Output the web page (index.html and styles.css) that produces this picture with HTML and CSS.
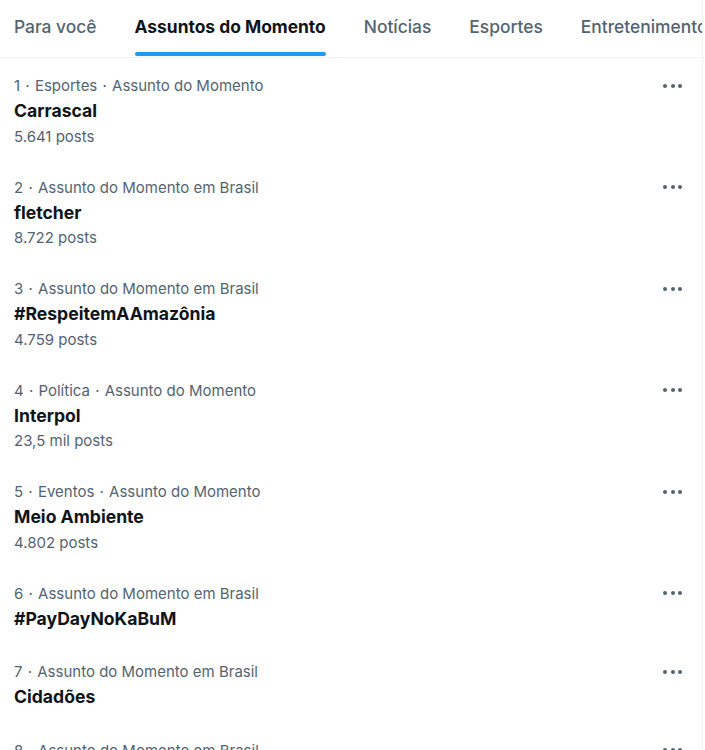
FILE: index.html
```html
<!DOCTYPE html>
<html>

<head>
    <meta charset="utf-8">
    <title>Assuntos do Momento</title>
    <link rel="stylesheet" href="styles.css">
</head>

<body>
    <div class="wrap">
        <div class="tabs">
            <a class="tab" href="">Para você</a>
            <a class="tab active" href="">Assuntos do Momento</a>
            <a class="tab" href="">Notícias</a>
            <a class="tab" href="">Esportes</a>
            <a class="tab" href="">Entretenimento</a>
        </div>

        <div class="list">
            <div class="trend">
                <div class="info">
                    <div class="meta">1 <b>·</b> Esportes <b>·</b> Assunto do Momento</div>
                    <div class="name">Carrascal</div>
                    <div class="count">5.641 posts</div>
                </div>
                <span class="more"><i></i><i></i><i></i></span>
            </div>
            <div class="trend">
                <div class="info">
                    <div class="meta">2 <b>·</b> Assunto do Momento em Brasil</div>
                    <div class="name">fletcher</div>
                    <div class="count">8.722 posts</div>
                </div>
                <span class="more"><i></i><i></i><i></i></span>
            </div>
            <div class="trend">
                <div class="info">
                    <div class="meta">3 <b>·</b> Assunto do Momento em Brasil</div>
                    <div class="name">#RespeitemAAmazônia</div>
                    <div class="count">4.759 posts</div>
                </div>
                <span class="more"><i></i><i></i><i></i></span>
            </div>
            <div class="trend">
                <div class="info">
                    <div class="meta">4 <b>·</b> Política <b>·</b> Assunto do Momento</div>
                    <div class="name">Interpol</div>
                    <div class="count">23,5 mil posts</div>
                </div>
                <span class="more"><i></i><i></i><i></i></span>
            </div>
            <div class="trend">
                <div class="info">
                    <div class="meta">5 <b>·</b> Eventos <b>·</b> Assunto do Momento</div>
                    <div class="name">Meio Ambiente</div>
                    <div class="count">4.802 posts</div>
                </div>
                <span class="more"><i></i><i></i><i></i></span>
            </div>
            <div class="trend short">
                <div class="info">
                    <div class="meta">6 <b>·</b> Assunto do Momento em Brasil</div>
                    <div class="name">#PayDayNoKaBuM</div>
                </div>
                <span class="more"><i></i><i></i><i></i></span>
            </div>
            <div class="trend short">
                <div class="info">
                    <div class="meta">7 <b>·</b> Assunto do Momento em Brasil</div>
                    <div class="name">Cidadões</div>
                </div>
                <span class="more"><i></i><i></i><i></i></span>
            </div>
            <div class="trend">
                <div class="info">
                    <div class="meta">8 <b>·</b> Assunto do Momento em Brasil</div>
                    <div class="name">Bolsonaro</div>
                    <div class="count">12,1 mil posts</div>
                </div>
                <span class="more"><i></i><i></i><i></i></span>
            </div>
        </div>
    </div>
</body>

</html>
```

FILE: styles.css
```css
html,
body {
    margin: 0;
    padding: 0;
    background: #ffffff;
    overflow: hidden;
}

body {
    font-family: Inter, "Liberation Sans", sans-serif;
    color: #0f1419;
}

a {
    text-decoration: none;
}

.wrap {
    width: 702px;
    height: 750px;
    border-right: 1px solid #eff3f4;
    overflow: hidden;
}

.tabs {
    display: flex;
    height: 57px;
    border-bottom: 1px solid #eff3f4;
    padding-left: 14px;
    gap: 38px;
    white-space: nowrap;
}

.tab {
    position: relative;
    font-size: 17.4px;
    font-weight: 500;
    line-height: 54px;
    color: #536471;
}

.tab.active {
    font-weight: 700;
    color: #0f1419;
}

.tab.active::after {
    content: "";
    position: absolute;
    left: 0;
    right: 0;
    bottom: 1px;
    height: 4px;
    border-radius: 2px;
    background: #1d9bf0;
}

.trend {
    display: flex;
    justify-content: space-between;
    padding: 15px 20px 11px 14px;
}

.trend.short {
    padding-bottom: 13px;
}

.meta {
    font-size: 15px;
    line-height: 25px;
    color: #536471;
}

.meta>b {
    font-weight: 400;
    margin: 0 1px;
}

.name {
    font-size: 17.6px;
    font-weight: 700;
    line-height: 25.5px;
}

.count {
    font-size: 15px;
    line-height: 25px;
    color: #536471;
}

.more {
    display: flex;
    gap: 3.5px;
    height: 25px;
    align-items: center;
}

.more>i {
    width: 4px;
    height: 4px;
    border-radius: 50%;
    background: #536471;
}
```
